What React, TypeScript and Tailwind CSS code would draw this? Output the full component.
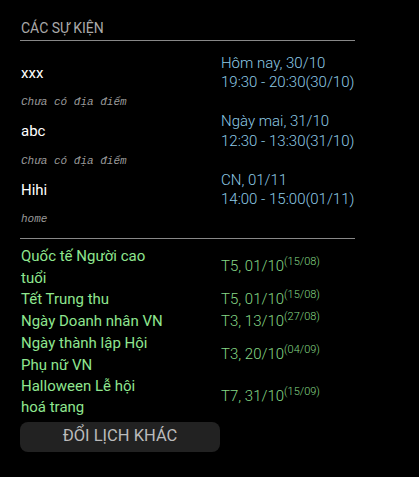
const events = [
  { name: 'xxx', place: 'Chưa có địa điểm', day: 'Hôm nay, 30/10', time: '19:30 - 20:30(30/10)' },
  { name: 'abc', place: 'Chưa có địa điểm', day: 'Ngày mai, 31/10', time: '12:30 - 13:30(31/10)' },
  { name: 'Hihi', place: 'home', day: 'CN, 01/11', time: '14:00 - 15:00(01/11)' },
]

const holidays = [
  { name: 'Quốc tế Người cao tuổi', date: 'T5, 01/10', lunar: '(15/08)' },
  { name: 'Tết Trung thu', date: 'T5, 01/10', lunar: '(15/08)' },
  { name: 'Ngày Doanh nhân VN', date: 'T3, 13/10', lunar: '(27/08)' },
  { name: 'Ngày thành lập Hội Phụ nữ VN', date: 'T3, 20/10', lunar: '(04/09)' },
  { name: 'Halloween Lễ hội hoá trang', date: 'T7, 31/10', lunar: '(15/09)' },
]

export default function App() {
  return (
    <div className="w-[419px] h-[477px] bg-black pt-[18px] pl-5 font-['Roboto',sans-serif]">
      <div className="w-[335px]">
        <div className="text-[14px] leading-[21px] text-[#aaa] border-b border-[#888] pb-[1px] pl-[1px]">
          CÁC SỰ KIỆN
        </div>

        <div className="mt-[13px]">
          {events.map((ev, i) => (
            <div key={i}>
              <div className="grid grid-cols-[201px_1fr]">
                <div className="flex items-center pl-[1px] text-[15px] text-white">{ev.name}</div>
                <div className="whitespace-nowrap text-[15px] font-light leading-[19.2px] text-[#8ecae6]">
                  <div>{ev.day}</div>
                  <div>{ev.time}</div>
                </div>
              </div>
              <div className="h-[20px] flex items-center pl-[1px] font-['Liberation_Mono',monospace] italic text-[11px] text-[#999]">
                {ev.place}
              </div>
            </div>
          ))}
        </div>

        <div className="mt-[9px] border-t border-[#888]" />

        <div className="mt-[7px]">
          {holidays.map((h, i) => (
            <div key={i} className="grid grid-cols-[201px_1fr]">
              <div className="max-w-[143px] pl-[1px] text-[15px] leading-[21.3px] text-[#8fe68f]">{h.name}</div>
              <div className="flex items-center whitespace-nowrap text-[15px] font-light leading-[21.3px] text-[#86d886]">
                <span>
                  {h.date}
                  <span className="relative -top-[6px] text-[11px]">{h.lunar}</span>
                </span>
              </div>
            </div>
          ))}
        </div>

        <button className="mt-[3px] w-[200px] h-[30px] rounded-[8px] bg-[#222] text-[16.5px] text-[#bbb] uppercase flex items-center justify-center">
          ĐỔI LỊCH KHÁC
        </button>
      </div>
    </div>
  )
}
